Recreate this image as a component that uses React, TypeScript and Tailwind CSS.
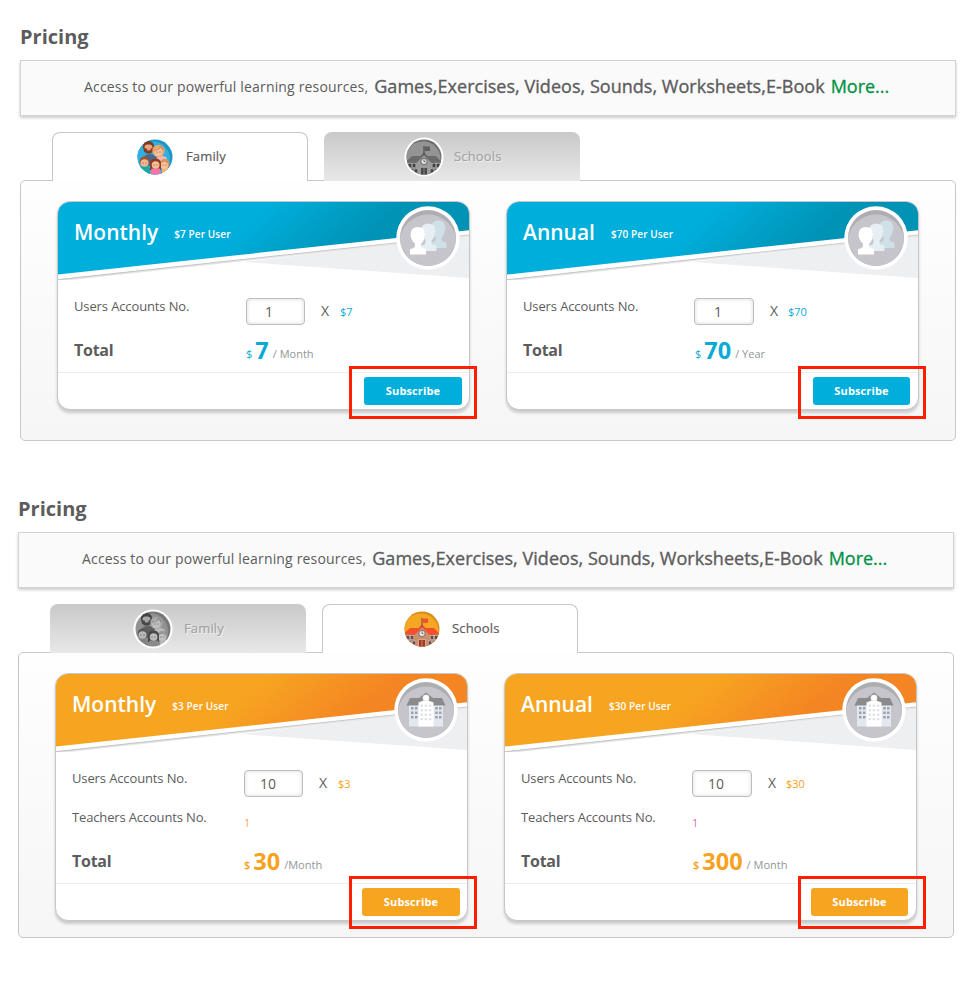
import React from 'react';

type Theme = 'family' | 'schools';

const colors = {
  family: { main: '#00aedb', dark: '#0093b6', text: 'text-[#0aaad6]', button: 'bg-[#00aedb]' },
  schools: { main: '#f7a421', dark: '#f48523', text: 'text-[#f7a121]', button: 'bg-[#f7a421]' },
};

function FamilyIcon({ active }: { active: boolean }) {
  const id = active ? 'famOn' : 'famOff';
  return (
    <svg width="40" height="40" viewBox="0 0 40 40" className="shrink-0">
      <defs>
        <clipPath id={id}>
          <circle cx="20" cy="20" r="17.5" />
        </clipPath>
      </defs>
      {!active && <circle cx="20" cy="20" r="19.6" fill="#fff" />}
      <g clipPath={`url(#${id})`} className={active ? '' : 'grayscale brightness-95'}>
        <rect width="40" height="40" fill="#1c95c4" />
        <circle cx="17.5" cy="22" r="17.5" fill="#2fb0e2" />
        <path d="M7 25q1-8 8-8 6 0 9 5v7H7z" fill="#456a92" />
        <path d="M20 23l4-5 7 2q2 3 0 7H20z" fill="#f4b8b4" />
        <circle cx="13.5" cy="9.5" r="5.6" fill="#7d3b20" />
        <rect x="9.5" y="7.5" width="8" height="7" rx="3" fill="#eda57b" />
        <path d="M8.8 10.5q4.500 3 9.400 0v4q-4.500 4.500-9.400 0z" fill="#843d22" />
        <path d="M12 12.800h3.500" stroke="#f7d6bb" strokeWidth="1" />
        <circle cx="23.500" cy="14" r="6.200" fill="#e8a66d" />
        <ellipse cx="23.300" cy="15" rx="4" ry="4.200" fill="#f6c09a" />
        <path d="M19 13q5 0 7-4 2 2 2 4" fill="none" stroke="#d98a55" strokeWidth="1.400" />
        <path d="M3 38v-7q6-5 12 0v8z" fill="#1ba79f" />
        <circle cx="9.500" cy="24.300" r="4.800" fill="#a94d28" />
        <ellipse cx="9.500" cy="26" rx="4" ry="3.700" fill="#f5b88e" />
        <path d="M27 39v-7q5-4 8 1v6z" fill="#f9b65e" />
        <circle cx="29.500" cy="27" r="5" fill="#dc935b" />
        <ellipse cx="29.200" cy="28.500" rx="3.900" ry="3.600" fill="#f7c39c" />
        <path d="M15 33v-6q0-5.500 5.500-5.500t5.500 5.500v6z" fill="#8c3c22" />
        <path d="M14.500 39l2-7.500h8.500l2 7.500z" fill="#f173a9" />
        <ellipse cx="20.600" cy="28" rx="3.900" ry="3.800" fill="#f8bd97" />
        <g fill="#6a3521">
          <circle cx="8" cy="26" r=".5" /><circle cx="11" cy="26" r=".5" />
          <circle cx="19" cy="28" r=".5" /><circle cx="22" cy="28" r=".5" />
          <circle cx="28" cy="28" r=".5" /><circle cx="31" cy="28" r=".5" />
          <circle cx="22" cy="15" r=".5" /><circle cx="25" cy="15" r=".5" />
        </g>
      </g>
    </svg>
  );
}

function SchoolIcon({ active }: { active: boolean }) {
  const c = active
    ? { back: '#d98c1d', bg: '#f5a623', roof: '#f4502d', wall: '#b97c62', front: '#c98f70', win: '#5d4d5b', door: '#9d3a2b', frame: '#f5d4ab', clock: '#f3eadc' }
    : { back: '#6f6f6f', bg: '#949494', roof: '#6b6b6b', wall: '#8a8a8a', front: '#9c9c9c', win: '#424242', door: '#4a4a4a', frame: '#b5b5b5', clock: '#e4e4e4' };
  const id = active ? 'schOn' : 'schOff';
  return (
    <svg width="40" height="40" viewBox="0 0 40 40" className="shrink-0">
      <defs>
        <clipPath id={id}>
          <circle cx="20" cy="20" r="17.500" />
        </clipPath>
      </defs>
      {!active && <circle cx="20" cy="20" r="19.600" fill="#fff" />}
      <g clipPath={`url(#${id})`}>
        <rect width="40" height="40" fill={c.back} />
        <circle cx="19" cy="22" r="17.500" fill={c.bg} />
        <rect x="2" y="25" width="36" height="14" fill={c.wall} />
        <path d="M8 19h24l6 6.500H1z" fill={c.roof} />
        <path d="M12 26l8-8 8 8v13H12z" fill={c.front} />
        <path d="M9.500 27L20 17l10.500 10" fill="none" stroke={c.roof} strokeWidth="2.200" />
        <path d="M20 18V9" stroke={c.win} strokeWidth="1" />
        <path d="M20.500 9.500H26v4.500h-5.500z" fill={active ? '#f1532d' : '#5f5f5f'} />
        <circle cx="20" cy="24.500" r="3.100" fill={c.clock} stroke={c.win} strokeWidth=".7" />
        <path d="M20 22.600v2h1.500" fill="none" stroke={c.win} strokeWidth=".8" />
        <g fill={c.win} stroke={c.frame} strokeWidth=".5">
          <rect x="4" y="26.500" width="3.600" height="4" /><rect x="8.200" y="26.500" width="3.600" height="4" />
          <rect x="28.200" y="26.500" width="3.600" height="4" /><rect x="32.400" y="26.500" width="3.600" height="4" />
          <rect x="6" y="32" width="3.600" height="4" /><rect x="10.200" y="32" width="3.600" height="4" />
          <rect x="26.200" y="32" width="3.600" height="4" /><rect x="30.400" y="32" width="3.600" height="4" />
        </g>
        <path d="M16.500 30.500h7V39h-7z" fill={c.door} stroke={c.frame} strokeWidth=".6" />
        <path d="M20 31v8" stroke={c.frame} strokeWidth=".5" />
      </g>
    </svg>
  );
}

function Bust({ x, y, fill }: { x: number; y: number; fill: string }) {
  return (
    <path
      transform={`translate(${x} ${y})`}
      fill={fill}
      d="M8 0q6.500 0 6.500 6l.8 2.200-1 .7q-.3 6-3.300 8v2.600q0 1.500 5 2.700V27.500H0v-5.300q4-.7 5-2.700v-3Q.500 13 .6 7 1 0 8 0z"
    />
  );
}

function HeaderArt({ theme, id, cx }: { theme: Theme; id: string; cx: number }) {
  const c = colors[theme];
  return (
    <svg width="411" height="82" viewBox="0 0 411 82" className="absolute inset-0">
      <defs>
        <linearGradient id={id} gradientUnits="userSpaceOnUse" x1="210" y1="5" x2="266" y2="70">
          <stop offset="0" stopColor={c.main} />
          <stop offset="1" stopColor={c.dark} />
        </linearGradient>
        <clipPath id={`${id}c`}>
          <circle cx="370.500" cy="36" r="28" />
        </clipPath>
      </defs>
      <path d="M185 60L411 33v43z" fill="#eeeff1" />
      <path d="M0 78.500L411 33.500" stroke="#e6e6e7" strokeWidth="2" />
      <path d="M0 77.500L411 32.500" stroke="#c6c7c9" strokeWidth="1.500" />
      <path d="M0 72L411 28v4.500L0 77z" fill="#fff" />
      <path d="M0 0H411V28.200L0 72.500z" fill={`url(#${id})`} />
      <g transform={`translate(${cx - 370.5} 0)`}>
        <circle cx="370.500" cy="36" r="31.700" fill="#fff" />
        <g clipPath={`url(#${id}c)`}>
          <rect x="340" y="5" width="62" height="62" fill="#adaeb2" />
          <circle cx="370.500" cy="41" r="28.500" fill="#c6c5cb" />
          {theme === 'family' ? (
            <g>
              <Bust x={373} y={18.5} fill="#cfe0e8" />
              <Bust x={363} y={21.5} fill="#e6eff4" />
              <Bust x={352.5} y={25} fill="#fff" />
            </g>
          ) : (
            <g>
              <path d="M353.500 30h34v22.500h-34z" fill="#e3e8f0" />
              <path d="M354.500 24h32l3.500 7.500h-39z" fill="#8b8b8d" />
              <path d="M363 24.500l7.500-6 7.500 6z" fill="#8b8b8d" />
              <path d="M363 28.500l5-2h5l5 2v24h-15z" fill="#fff" />
              <circle cx="370.500" cy="24" r="3.200" fill="#fff" stroke="#d8d8dc" strokeWidth=".5" />
              <g fill="#9ba0ad">
                {[33, 37.5, 42].map((y) =>
                  [355.5, 359.5, 379.7, 383.5].map((x) => <rect key={`${x}-${y}`} x={x} y={y} width="2.500" height="2.500" />)
                )}
              </g>
              <g fill="#e2e2e8">
                {[30.5, 35, 39.5, 44].map((y) =>
                  [365, 369.2, 373.4].map((x) => <rect key={`${x}-${y}`} x={x} y={y} width="2.500" height="2.300" />)
                )}
              </g>
            </g>
          )}
        </g>
      </g>
    </svg>
  );
}

interface Plan {
  name: string;
  price: string;
  users: string;
  total: string;
  period: string;
  teachers?: string;
  teachersClass?: string;
}

function PlanCard({ theme, plan }: { theme: Theme; plan: Plan }) {
  const c = colors[theme];
  const school = theme === 'schools';
  const annual = plan.name === 'Annual';
  const labelWidth = annual ? 'w-[171px]' : 'w-[172px]';
  return (
    <article className="w-[413px] shrink-0 rounded-[13px] border border-[#c6c7c8] bg-white shadow-[0_3px_3px_rgba(0,0,0,0.18)]">
      <header className="relative h-[78px] overflow-hidden rounded-t-[12px] text-white">
        <HeaderArt theme={theme} id={`${theme}${plan.name}`} cx={annual ? 369 : 370} />
        <div className="relative flex items-start gap-4 pl-4">
          <h2 className="pt-4 text-[21px] font-semibold leading-7">{plan.name}</h2>
          <span className="pt-[25px] text-[10px] font-semibold leading-[15px] tracking-[0.1px]">{plan.price} Per User</span>
        </div>
      </header>
      <div className="pl-4 pt-[18px]">
        <div className="flex h-[39px] items-start">
          <span className={`${labelWidth} text-[13px] leading-4 tracking-[-0.12px]`}>Users Accounts No.</span>
          <span
            className={`flex h-[27px] items-center rounded-[4px] border border-[#bdbdbd] bg-white text-[14px] shadow-[inset_0_0_4px_rgba(0,0,0,0.15)] ${
              annual ? 'w-[60px]' : 'w-[59px]'
            } ${school ? 'pl-[15px]' : annual ? 'pl-[19px]' : 'pl-[18px]'}`}
          >
            {plan.users}
          </span>
          <span className="ml-4 w-2 text-[14px] leading-[26px]">X</span>
          <span className={`text-[11px] leading-[28px] ${annual ? 'ml-[10px]' : 'ml-[11px]'} ${c.text}`}>{plan.price}</span>
        </div>
        {plan.teachers && (
          <div className="flex h-[39px] items-start">
            <span className={`${labelWidth} text-[13px] leading-4 tracking-[-0.15px]`}>Teachers Accounts No.</span>
            <span className={`text-[11px] leading-[28px] ${plan.teachersClass}`}>{plan.teachers}</span>
          </div>
        )}
        <div className="flex h-[35px] items-start">
          <span className="w-[172px] text-[16px] font-bold leading-[26px] tracking-[-0.25px]">Total</span>
          <span className="flex items-start">
            <span className={`pt-[7px] text-[11px] leading-5 ${c.text} ${school ? 'font-semibold' : ''}`}>$</span>
            <span className={`ml-[3px] text-[23.5px] font-bold leading-[27px] ${c.text}`}>{plan.total}</span>
            <span className="ml-1 pt-[7px] text-[11px] leading-5 text-[#939598]">{plan.period}</span>
          </span>
        </div>
      </div>
      <footer className={`flex h-[37px] justify-end border-t border-[#ececed] pt-1 ${annual ? 'pr-2' : 'pr-[7px]'}`}>
        <div className={`relative h-7 ${annual ? 'w-[97px]' : 'w-[98px]'}`}>
          <button className={`h-7 w-full rounded-[3px] text-[11px] font-bold tracking-[0.12px] text-white ${c.button}`}>Subscribe</button>
          <div
            className={`pointer-events-none absolute h-[53px] w-[128px] border-[3px] border-[#ff1f00] ${
              school ? '-left-[13px] -top-3' : '-left-[15px] -top-[11px]'
            }`}
          />
        </div>
      </footer>
    </article>
  );
}

function Tab({ kind, active }: { kind: Theme; active: boolean }) {
  const family = kind === 'family';
  return (
    <div
      className={`flex h-[49px] w-64 items-center rounded-t-[8px] ${
        family ? (active ? 'pl-[82px]' : 'pl-[83px]') : active ? 'pl-[79px]' : 'pl-[80px]'
      } ${
        active
          ? 'border border-b-0 border-[#c6c7c8] bg-white'
          : 'bg-linear-to-b from-[#c9c9c9] to-[#e8e8e8] text-[#a4a4a4] [text-shadow:1px_1px_0_rgba(255,255,255,0.65)]'
      }`}
    >
      {family ? <FamilyIcon active={active} /> : <SchoolIcon active={active} />}
      <span className={`text-[13px] tracking-[0.15px] [-webkit-text-stroke:0.2px] ${family ? 'ml-[11px]' : 'ml-[10px]'}`}>
        {family ? 'Family' : 'Schools'}
      </span>
    </div>
  );
}

function Pricing({ theme, plans }: { theme: Theme; plans: Plan[] }) {
  return (
    <section className="w-[936px]">
      <h1 className="h-[37px] text-[20px] font-bold leading-[27px]">Pricing</h1>
      <div className="flex h-14 items-start border border-[#d2d3d4] bg-[#fafafa] pl-[63px] pt-3 shadow-[0_2px_3px_rgba(0,0,0,0.2)]">
        <span className="whitespace-nowrap pt-1 text-[14px] leading-5 tracking-[0.17px]">Access to our powerful learning resources,</span>
        <span className="ml-[6px] whitespace-nowrap text-[18px] leading-[27px] tracking-[0.03px] [-webkit-text-stroke:0.35px]">
          Games,Exercises, Videos, Sounds, Worksheets,E-Book
        </span>
        <span className="ml-[6px] text-[18px] leading-[27px] text-[#009245] [-webkit-text-stroke:0.3px]">More...</span>
      </div>
      <div className="relative mt-4 flex gap-4 pl-8">
        <Tab kind="family" active={theme === 'family'} />
        <Tab kind="schools" active={theme === 'schools'} />
      </div>
      <div
        className={`-mt-px flex items-start gap-9 rounded-[5px] border border-[#c6c7c8] bg-linear-to-b from-[#fefefe] to-[#f6f6f6] pl-9 pt-5 ${
          theme === 'family' ? 'h-[261px]' : 'h-[286px]'
        }`}
      >
        {plans.map((p) => (
          <PlanCard key={p.name} theme={theme} plan={p} />
        ))}
      </div>
    </section>
  );
}

const familyPlans: Plan[] = [
  { name: 'Monthly', price: '$7', users: '1', total: '7', period: '/ Month' },
  { name: 'Annual', price: '$70', users: '1', total: '70', period: '/ Year' },
];

const schoolPlans: Plan[] = [
  { name: 'Monthly', price: '$3', users: '10', total: '30', period: '/Month', teachers: '1', teachersClass: 'text-[#f7a85a]' },
  { name: 'Annual', price: '$30', users: '10', total: '300', period: '/ Month', teachers: '1', teachersClass: 'text-[#d070b8]' },
];

export default function App() {
  return (
    <main className="h-[1000px] w-[973px] overflow-hidden bg-white pl-5 pt-[23px] font-['Open_Sans',sans-serif] text-[#5c5c5d]">
      <Pricing theme="family" plans={familyPlans} />
      <div className="-ml-[2px] mt-[54px]">
        <Pricing theme="schools" plans={schoolPlans} />
      </div>
    </main>
  );
}
